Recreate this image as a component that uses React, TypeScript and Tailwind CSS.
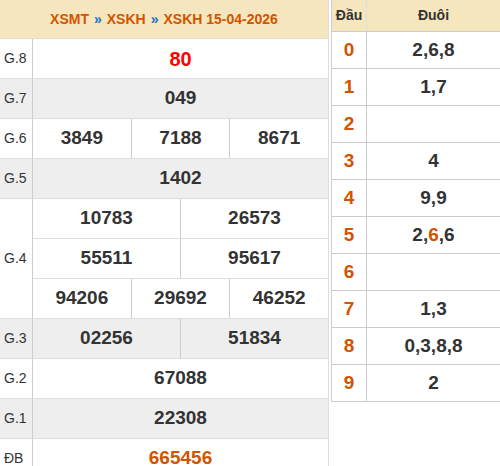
import React from 'react';

const font = { fontFamily: '"Liberation Sans", Arial, sans-serif' };

type Row = { label: string; lines: string[][]; bg: string; color?: string };

const rows: Row[] = [
  { label: 'G.8', lines: [['80']], bg: 'bg-white', color: 'text-[#ff0000] text-[20px]' },
  { label: 'G.7', lines: [['049']], bg: 'bg-[#eeeeee]' },
  { label: 'G.6', lines: [['3849', '7188', '8671']], bg: 'bg-white' },
  { label: 'G.5', lines: [['1402']], bg: 'bg-[#eeeeee]' },
  { label: 'G.4', lines: [['10783', '26573'], ['55511', '95617'], ['94206', '29692', '46252']], bg: 'bg-white' },
  { label: 'G.3', lines: [['02256', '51834']], bg: 'bg-[#eeeeee]' },
  { label: 'G.2', lines: [['67088']], bg: 'bg-white' },
  { label: 'G.1', lines: [['22308']], bg: 'bg-[#eeeeee]' },
  { label: 'ĐB', lines: [['665456']], bg: 'bg-white', color: 'text-[#d35400]' },
];

const loto: { head: string; tail: React.ReactNode }[] = [
  { head: '0', tail: '2,6,8' },
  { head: '1', tail: '1,7' },
  { head: '2', tail: '' },
  { head: '3', tail: '4' },
  { head: '4', tail: '9,9' },
  { head: '5', tail: <>2,<span className="text-[#d35400]">6</span>,6</> },
  { head: '6', tail: '' },
  { head: '7', tail: '1,3' },
  { head: '8', tail: '0,3,8,8' },
  { head: '9', tail: '2' },
];

export default function App() {
  return (
    <div className="flex items-start w-[500px] h-[466px] overflow-hidden bg-white" style={font}>
      <div className="w-[329px] shrink-0 border-r border-[#dddddd]">
        <div className="h-[38px] bg-[#f5e6bd] flex items-center justify-center text-[14px] font-bold text-[#d35400]">
          XSMT <span className="text-[#1a73c9] mx-[5px]">»</span> XSKH <span className="text-[#1a73c9] mx-[5px]">»</span> XSKH 15-04-2026
        </div>
        {rows.map((r) => (
          <div key={r.label} className={`flex border-t border-[#dddddd] ${r.bg}`}>
            <div className="w-[33px] shrink-0 border-r border-[#cccccc] flex items-center pl-[4px] text-[14px] text-[#333333]">
              {r.label}
            </div>
            <div className="flex-1 flex flex-col">
              {r.lines.map((line, i) => (
                <div key={i} className={`h-[39px] flex ${i > 0 ? 'border-t border-[#dddddd] h-[40px]' : ''}`}>
                  {line.map((v, j) => (
                    <div
                      key={v}
                      className={`flex-1 flex items-center justify-center font-bold text-[19px] ${r.color ?? 'text-[#333333]'} ${j > 0 ? 'border-l border-[#cccccc]' : ''}`}
                    >
                      {v}
                    </div>
                  ))}
                </div>
              ))}
            </div>
          </div>
        ))}
      </div>

      <div className="ml-[2px] flex-1 border-l border-b border-[#cccccc]">
        <div className="h-[31px] flex bg-[#f5e6bd] text-[14px] font-bold text-[#333333]">
          <div className="w-[35px] border-r border-[#dddddd] flex items-center justify-center">Đầu</div>
          <div className="flex-1 flex items-center justify-center">Đuôi</div>
        </div>
        {loto.map((l) => (
          <div key={l.head} className="h-[37px] flex border-t border-[#cccccc]">
            <div className="w-[35px] border-r border-[#cccccc] flex items-center justify-center font-bold text-[19px] text-[#d35400]">
              {l.head}
            </div>
            <div className="flex-1 flex items-center justify-center font-bold text-[19px] text-[#333333]">
              {l.tail}
            </div>
          </div>
        ))}
      </div>
    </div>
  );
}
